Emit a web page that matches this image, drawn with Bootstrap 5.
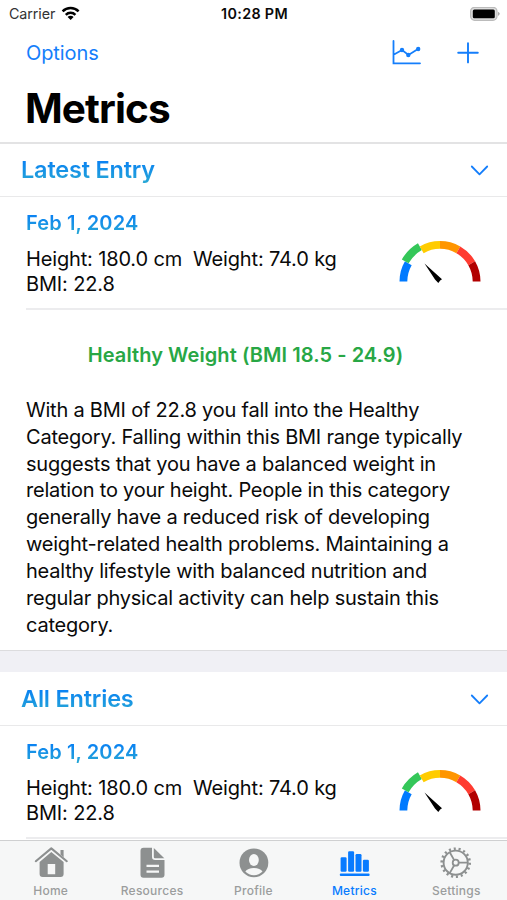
<!DOCTYPE html>
<html lang="en">
<head>
<meta charset="utf-8">
<meta name="viewport" content="width=device-width, initial-scale=1">
<title>Metrics</title>
<link href="https://cdn.jsdelivr.net/npm/bootstrap@5.3.0/dist/css/bootstrap.min.css" rel="stylesheet">
<style>
  body { font-family: Inter, "Liberation Sans", sans-serif; color: #0a0a0a; font-size: 20px; }
  svg { display: block; flex: none; }
  .screen { height: 900px; }
  .status { height: 28px; font-size: 14.3px; line-height: 28px; padding: 0 7px 0 9px; }
  .status > * { flex: 1 1 0; }
  .carrier { letter-spacing: -.1px; color: #333; }
  .wifi { margin-left: 5px; }
  .clock { font-size: 14.3px; font-weight: 600; letter-spacing: .34px; }
  .tools { height: 50px; padding: 0 28px 0 26px; color: #147efb; }
  .tools a { color: inherit; font-size: 20px; letter-spacing: -.1px; }
  .add-icon { margin-left: 35px; }
  .chart-icon { margin-bottom: 2px; }
  .page-title { height: 64px; padding: 0 25px; font-size: 40.5px; line-height: 62px; font-weight: 700; letter-spacing: -.9px; color: #000; }
  .topbar { border-bottom: 2px solid #e3e3e4; height: 144px; }
  .section-head { height: 54px; padding: 0 18px 0 21px; border-bottom: 1px solid #e9e9ea; }
  .section-head.first { height: 53px; padding-bottom: 1px; }
  .section-head h2, .date { font-weight: 600; background: linear-gradient(#087ff5 15%, #28a9d4 95%); -webkit-background-clip: text; background-clip: text; color: transparent; white-space: nowrap; }
  .section-head h2 { font-size: 23.5px; line-height: 30px; letter-spacing: -.2px; }
  .section-head svg { margin-top: 2px; }
  .entry { height: 113px; margin-left: 26px; padding: 13px 26px 0 0; border-bottom: 2px solid #ececee; }
  .date { font-size: 20px; line-height: 26px; letter-spacing: .12px; }
  .measure { font-size: 20px; line-height: 25px; letter-spacing: -.15px; white-space: pre; margin-top: 11px; }
  .gauge { margin-top: 30px; }
  .verdict { font-size: 20px; line-height: 26px; font-weight: 600; color: #28a745; letter-spacing: .07px; padding: 32px 16px 0 0; white-space: nowrap; }
  .advice { font-size: 20px; line-height: 26.9px; letter-spacing: -.22px; padding: 28.7px 0 0 26px; white-space: nowrap; }
  .summary { height: 340px; }
  .gap-band { height: 22px; background: #f0f0f5; border-top: 1px solid #dcdcde; }
  .tabs { height: 60px; background: #f6f7f7; border-top: 1px solid #cfd0d1; font-size: 12px; font-weight: 500; }
  .tabs a { flex: 1 1 0; color: #9b9d9d; letter-spacing: .25px; padding-top: 3px; }
  .tabs a svg { color: #8d9090; }
  .tabs a.current, .tabs a.current svg { color: #087bff; }
  .tabs span { line-height: 16px; margin-top: 3px; }
  .tabs .current span { margin-right: 1px; }
</style>
<script src="https://cdn.jsdelivr.net/npm/bootstrap@5.3.0/dist/js/bootstrap.bundle.min.js"></script>
</head>
<body class="bg-white overflow-hidden">
<svg width="0" height="0" class="position-absolute" aria-hidden="true">
  <defs>
    <g id="bmi-gauge" fill="none" stroke-width="7.8">
      <path stroke="#007aff" d="M4.4 41.5A36.6 36.6 0 0 1 9.3 23.2"/>
      <path stroke="#34c759" d="M6.2 21.4A40.2 40.2 0 0 1 20.9 6.7"/>
      <path stroke="#ffcc00" d="M22.7 9.8A36.6 36.6 0 0 1 41 4.9"/>
      <path stroke="#ff9500" d="M41 4.9A36.6 36.6 0 0 1 59.3 9.8"/>
      <path stroke="#ff3b30" d="M59.3 9.8A36.6 36.6 0 0 1 72.7 23.2"/>
      <path stroke="#b20000" d="M72.7 23.2A36.6 36.6 0 0 1 77.6 41.5"/>
      <path fill="#000" d="M25.5 23.4L43 39.2 41.2 40.5 39.3 43 36 39.5Z"/>
    </g>
    <path id="chevron" d="M1.8 1.5L9.5 9.3 17.2 1.5" fill="none" stroke="#147efb" stroke-width="1.8" stroke-linecap="round" stroke-linejoin="round"/>
  </defs>
</svg>
<div class="screen d-flex flex-column">
  <header class="topbar flex-shrink-0">
    <div class="status d-flex align-items-center">
      <div class="d-flex align-items-center"><span class="carrier">Carrier</span>
        <svg class="wifi" width="22" height="16" viewBox="0 0 22 16"><g fill="none" stroke="#000" stroke-width="2.5"><path d="M2.6 5.3A11.2 11.2 0 0 1 18.6 5.3"/><path d="M5.8 8.8A6.8 6.8 0 0 1 15.4 8.8"/></g><path d="M10.6 14L7.6 11.1A4.2 4.2 0 0 1 13.6 11.1Z"/></svg>
      </div>
      <div class="clock text-center text-nowrap">10:28 PM</div>
      <div class="d-flex justify-content-end">
        <svg width="30" height="15" viewBox="0 0 30 15"><rect x=".6" y=".3" width="26.4" height="13" rx="4" fill="#ddd" stroke="#bbb" stroke-width="1.2"/><rect x="2.8" y="2.4" width="22" height="8.9" rx="1.5" fill="#000"/><path d="M28 4.7Q31.5 6.8 28 8.9Z" fill="#aaa"/></svg>
      </div>
    </div>
    <div class="tools d-flex align-items-center">
      <a href="#" class="text-decoration-none me-auto">Options</a>
      <svg class="chart-icon" width="31" height="28" viewBox="0 0 31 28" fill="none" stroke="currentColor" stroke-width="1.8" stroke-linecap="round"><path d="M2.5 3V25.3H29M3 16.5L11 12 17.5 17 27 11"/><g fill="currentColor" stroke="none"><circle cx="11" cy="12" r="2.2"/><circle cx="17.3" cy="17" r="2.2"/><circle cx="27.2" cy="11" r="2.2"/></g></svg>
      <svg class="add-icon" width="22" height="22" viewBox="0 0 22 22" fill="none" stroke="currentColor" stroke-width="1.9" stroke-linecap="round"><path d="M11 1.2V20.4M1.2 10.8H20.8"/></svg>
    </div>
    <h1 class="page-title m-0">Metrics</h1>
  </header>

  <section class="flex-shrink-0">
    <div class="section-head first d-flex align-items-center justify-content-between"><h2 class="m-0">Latest Entry</h2><svg width="19" height="11"><use href="#chevron"/></svg></div>
    <div class="entry d-flex justify-content-between">
      <div><div class="date">Feb 1, 2024</div><div class="measure">Height: 180.0 cm  Weight: 74.0 kg
BMI: 22.8</div></div>
      <svg class="gauge" width="82" height="46"><use href="#bmi-gauge"/></svg>
    </div>
    <div class="summary">
      <div class="verdict text-center">Healthy Weight (BMI 18.5 - 24.9)</div>
      <p class="advice m-0">With a BMI of 22.8 you fall into the Healthy<br>Category. Falling within this BMI range typically<br>suggests that you have a balanced weight in<br>relation to your height. People in this category<br>generally have a reduced risk of developing<br>weight-related health problems. Maintaining a<br>healthy lifestyle with balanced nutrition and<br>regular physical activity can help sustain this<br>category.</p>
    </div>
  </section>
  <div class="gap-band flex-shrink-0"></div>
  <section class="flex-shrink-0">
    <div class="section-head d-flex align-items-center justify-content-between"><h2 class="m-0">All Entries</h2><svg width="19" height="11"><use href="#chevron"/></svg></div>
    <div class="entry d-flex justify-content-between">
      <div><div class="date">Feb 1, 2024</div><div class="measure">Height: 180.0 cm  Weight: 74.0 kg
BMI: 22.8</div></div>
      <svg class="gauge" width="82" height="46"><use href="#bmi-gauge"/></svg>
    </div>
  </section>

  <nav class="tabs d-flex fixed-bottom">
    <a href="#" class="d-flex flex-column align-items-center text-decoration-none">
      <svg width="36" height="36" viewBox="0 0 36 36" fill="currentColor"><path d="M2.8 17.2L18.3 4.4 33.8 17.2" fill="none" stroke="currentColor" stroke-width="2.1" stroke-linecap="round" stroke-linejoin="round"/><path d="M27.5 6H30.6V13.2L27.5 10.6Z"/><path fill-rule="evenodd" d="M18.3 7.9L30.6 18V30Q30.6 33 27.6 33H9.6Q6.6 33 6.6 30V18ZM14.7 20V30.2H22.2V20Z"/></svg>
      <span>Home</span></a>
    <a href="#" class="d-flex flex-column align-items-center text-decoration-none">
      <svg width="36" height="36" viewBox="0 0 36 36" fill="currentColor"><path fill-rule="evenodd" d="M9.5 3.8H18V12.8Q18 16 21.2 16H30.5V30.8Q30.5 33.8 27.5 33.8H9.5Q6.5 33.8 6.5 30.8V6.8Q6.5 3.8 9.5 3.8ZM12.5 20.8V23H25V20.8ZM12.5 26.5V28.7H25V26.5Z"/><path d="M19.8 4.1L30.3 14.3H21Q19.8 14.3 19.8 13.1Z"/></svg>
      <span>Resources</span></a>
    <a href="#" class="d-flex flex-column align-items-center text-decoration-none">
      <svg width="36" height="36" viewBox="0 0 36 36"><circle cx="17.9" cy="18.8" r="14.4" fill="currentColor"/><ellipse cx="17.9" cy="16" rx="4.9" ry="5.9" fill="#f6f7f7"/><path d="M9.3 27.6Q11.6 24 17.9 24T26.5 27.6Q23 31.2 17.9 31.2T9.3 27.6Z" fill="#f6f7f7"/></svg>
      <span>Profile</span></a>
    <a href="#" class="current d-flex flex-column align-items-center text-decoration-none">
      <svg width="36" height="36" viewBox="0 0 36 36" fill="currentColor"><rect x="3.6" y="13.2" width="6" height="14.5" rx="1.2"/><rect x="11.1" y="7.2" width="6" height="20.5" rx="1.2"/><rect x="18.5" y="10" width="6" height="17.7" rx="1.2"/><rect x="25.9" y="15.8" width="6" height="11.9" rx="1.2"/><rect x="2.8" y="29.5" width="29.8" height="2.5" rx="1"/></svg>
      <span>Metrics</span></a>
    <a href="#" class="d-flex flex-column align-items-center text-decoration-none">
      <svg width="36" height="36" viewBox="0 0 36 36" fill="none" stroke="currentColor"><circle cx="17.7" cy="18.7" r="12.1" stroke-width="1.9"/><circle cx="17.7" cy="18.7" r="14" stroke-width="2.6" stroke-dasharray="2.1 2.787"/><circle cx="17.7" cy="18.7" r="3" stroke-width="1.8"/><path stroke-width="1.8" d="M20.7 18.7H29.7M16.2 16.1L11.7 8.3M16.2 21.3L11.7 29.1"/></svg>
      <span>Settings</span></a>
  </nav>
</div>
</body>
</html>
